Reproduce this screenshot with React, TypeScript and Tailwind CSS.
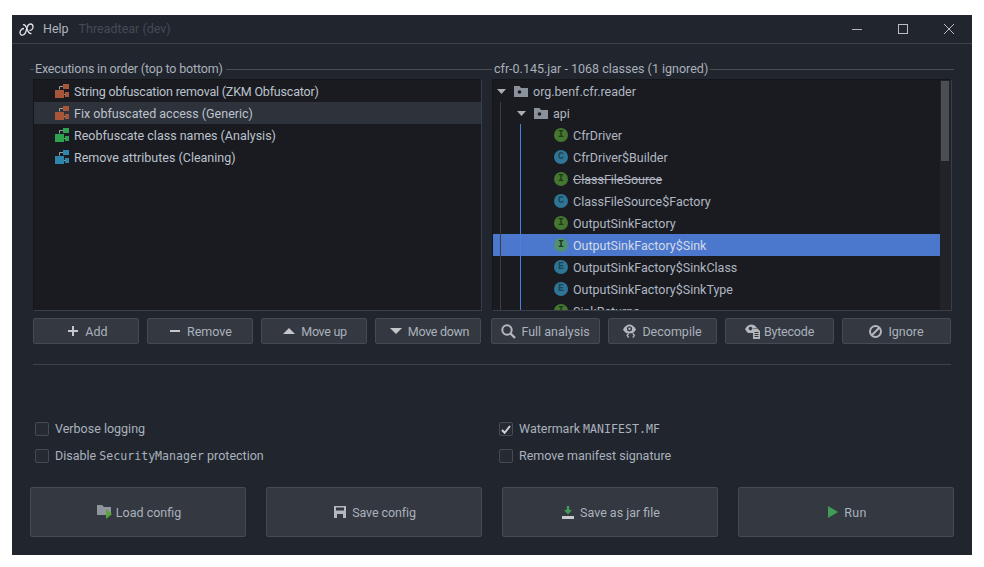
import React from "react";

const font = { fontFamily: '"Roboto", "Liberation Sans", sans-serif' };

function Stack({ color }: { color: string }) {
  return (
    <svg width="14" height="14" viewBox="0 0 14 14" className="shrink-0">
      <path d="M4.5 5.5V2.5H8" stroke="#9aa0a8" strokeWidth="1" fill="none" />
      <rect x="8" y="0" width="6" height="5" fill={color} />
      <rect x="0" y="6" width="9" height="8" fill={color} />
      <rect x="10" y="8" width="4" height="5" fill={color} />
      <path d="M9 10.5h1" stroke="#9aa0a8" />
    </svg>
  );
}

function ExecRow({ color, text, selected, tight }: { color: string; text: string; selected?: boolean; tight?: boolean }) {
  return (
    <div className={`h-[22px] flex items-center pl-[21px] gap-[5px] ${selected ? "bg-[#2e323b]" : ""}`}>
      <Stack color={color} />
      <span className={`pt-[2px] text-[#bcc3cd] whitespace-nowrap ${tight ? "tracking-[-0.19px]" : ""}`}>{text}</span>
    </div>
  );
}

function Folder() {
  return (
    <svg width="14" height="11" viewBox="0 0 14 11" className="shrink-0 block">
      <path d="M0 0H5.5L7 2H14V11H0Z" fill="#8a919b" />
      <circle cx="5.5" cy="6" r="1.8" fill="#1a1b20" />
    </svg>
  );
}

function Caret() {
  return (
    <svg width="9" height="5" viewBox="0 0 9 5" className="shrink-0">
      <path d="M0 0H9L4.5 5Z" fill="#a9adb3" />
    </svg>
  );
}

function Badge({ kind, selected }: { kind: "I" | "C" | "E"; selected?: boolean }) {
  const bg = kind === "I" ? (selected ? "bg-[#4f9171]" : "bg-[#44772f]") : "bg-[#2f7596]";
  const fg = kind === "I" ? "text-[#1f3a17]" : "text-[#1d4558]";
  return (
    <span className={`w-[14px] h-[14px] rounded-full flex items-center justify-center shrink-0 ${bg} ${fg} text-[10px] font-bold leading-none`} style={{ fontFamily: '"Liberation Mono", monospace' }}>
      {kind}
    </span>
  );
}

function ClassRow({ kind, text, strike, selected }: { kind: "I" | "C" | "E"; text: string; strike?: boolean; selected?: boolean }) {
  return (
    <div className={`h-[22px] shrink-0 flex items-center pl-[61px] gap-[5px] ${selected ? "bg-[#4b78cc]" : ""}`}>
      <Badge kind={kind} selected={selected} />
      <span className={`pt-[2px] whitespace-nowrap ${selected ? "text-[#d3daea]" : "text-[#b0b7c2]"} ${strike ? "line-through" : ""}`}>{text}</span>
    </div>
  );
}

function Btn({ icon, text, className = "", textClass = "" }: { icon: React.ReactNode; text: string; className?: string; textClass?: string }) {
  return (
    <div className={`flex items-center justify-center rounded-[2px] border border-[#454a53] bg-[#343840] text-[#aab2bd] ${className}`}>
      {icon}
      <span className={`pt-[2px] whitespace-nowrap ${textClass}`}>{text}</span>
    </div>
  );
}

function Check({ checked, children }: { checked?: boolean; children: React.ReactNode }) {
  return (
    <div className="h-[14px] flex items-center gap-[6px] text-[#aab2bd] whitespace-nowrap">
      <span className="w-[14px] h-[14px] rounded-[2px] border border-[#454a53] bg-[#262a32] flex items-center justify-center shrink-0">
        {checked && (
          <svg width="10" height="9" viewBox="0 0 10 9">
            <path d="M1 5l2.6 2.8L9 1" stroke="#d0d2d6" strokeWidth="2" fill="none" />
          </svg>
        )}
      </span>
      <span className="leading-[14px]">{children}</span>
    </div>
  );
}

const Mono = ({ children }: { children: React.ReactNode }) => (
  <span className="text-[11.6px] leading-none" style={{ fontFamily: '"DejaVu Sans Mono", monospace' }}>{children}</span>
);

const g = "#b4b7bc";

const icons = {
  plus: (
    <svg width="10" height="10" viewBox="0 0 10 10" className="mr-[7px]"><path d="M5 0v10M0 5h10" stroke="#c4c6ca" strokeWidth="2" /></svg>
  ),
  minus: (
    <svg width="10" height="2" viewBox="0 0 10 2" className="mr-[7px]"><path d="M0 1h10" stroke="#c4c6ca" strokeWidth="2" /></svg>
  ),
  up: (
    <svg width="12" height="6" viewBox="0 0 12 6" className="mr-[6px]"><path d="M6 0L12 6H0Z" fill="#c4c6ca" /></svg>
  ),
  down: (
    <svg width="12" height="6" viewBox="0 0 12 6" className="mr-[6px]"><path d="M6 6L12 0H0Z" fill="#c4c6ca" /></svg>
  ),
  search: (
    <svg width="15" height="15" viewBox="0 0 15 15" className="mr-[5px]"><circle cx="6" cy="6" r="4.7" stroke={g} strokeWidth="2" fill="none" /><path d="M9.5 9.5L14 14" stroke={g} strokeWidth="2.4" /></svg>
  ),
  decompile: (
    <svg width="15" height="14" viewBox="0 0 15 14" className="mr-[4px]">
      <path d="M0 5.5C1.8 2 4.5 .5 6.5 .5S11.2 2 13 5.5C12 7.2 10.8 8.4 9.5 9.2H3.5C2.2 8.4 1 7.2 0 5.5Z" fill={g} />
      <circle cx="6.5" cy="4.8" r="2.6" fill="#343840" />
      <circle cx="6.5" cy="4.8" r="1.2" fill={g} />
      <path d="M5.8 9.5L4 11.5l1.8 2M9.7 9.5l1.8 2-1.8 2" stroke={g} strokeWidth="1.2" fill="none" />
    </svg>
  ),
  bytecode: (
    <svg width="15" height="15" viewBox="0 0 15 15" className="mr-[4px]">
      <path d="M0 5C2 1.5 4.5 .5 6.5 .5S10.5 1.5 12 4H8V9H3C1.8 8 .8 6.5 0 5Z" fill={g} />
      <circle cx="5.5" cy="4.6" r="1.8" fill="#343840" />
      <path d="M8 4.5h4.5L15 7v8H8Z" fill={g} />
      <path d="M9.5 8.5h4M9.5 10.5h4M9.5 12.5h4" stroke="#343840" />
    </svg>
  ),
  ban: (
    <svg width="13" height="13" viewBox="0 0 13 13" className="mr-[6px]"><circle cx="6.5" cy="6.5" r="5.5" stroke={g} strokeWidth="2" fill="none" /><path d="M2.8 10.2l7.4-7.4" stroke={g} strokeWidth="2" /></svg>
  ),
  load: (
    <svg width="15" height="14" viewBox="0 0 15 14" className="mr-[4px]">
      <path d="M0 0H5L7 2H14V10H0Z" fill="#8f959d" />
      <path d="M9 4L15 9L9 14Z" fill="#58a53a" />
    </svg>
  ),
  save: (
    <svg width="12" height="12" viewBox="0 0 12 12" className="mr-[6px]">
      <path d="M0 0H12V12H0Z" fill={g} />
      <rect x="2" y="1.5" width="8" height="3" fill="#343840" />
      <rect x="3" y="8" width="6" height="4" fill="#343840" />
    </svg>
  ),
  jar: (
    <svg width="12" height="13" viewBox="0 0 12 13" className="mr-[6px]">
      <path d="M4.8 0h2.4v4H10L6 8.5 2 4h2.8Z" fill="#3f9d55" />
      <rect x="0" y="10" width="12" height="3" fill="#c8c9cc" />
    </svg>
  ),
  run: (
    <svg width="10" height="12" viewBox="0 0 10 12" className="mr-[6px]"><path d="M0 0L10 6L0 12Z" fill="#3f9d55" /></svg>
  ),
};

export default function App() {
  return (
    <div className="w-[984px] h-[567px] bg-white pt-[15px] pl-[12px]">
      <div className="w-[960px] h-[540px] bg-[#21252d] text-[12.5px] leading-none flex flex-col" style={font}>
        <div className="h-[29px] shrink-0 border-b border-[#3e424b] flex items-center">
          <svg width="15" height="13" viewBox="0 0 15 13" className="ml-[7px] mr-[9px]">
            <path d="M5 5.5C3 5.5 1 7.5 1 9.5S2.5 12.5 4 12 7 9 7.5 6.5 9 1 11.5 1 14 2.5 14 4 12.5 7.5 10.5 7.5" stroke="#e2e3e5" strokeWidth="1.3" fill="none" />
            <path d="M4 2C5.5 1 7 3 8 6S10 11 12.5 10.5" stroke="#e2e3e5" strokeWidth="1.3" fill="none" />
          </svg>
          <span className="text-[#aeb5bf]">Help</span>
          <span className="ml-[10px] text-[#454a57]">Threadtear (dev)</span>
          <div className="ml-auto flex items-center">
            <svg width="10" height="1" viewBox="0 0 10 1" className="mr-[36px]"><path d="M0 .5h10" stroke="#b5b5b5" /></svg>
            <svg width="10" height="10" viewBox="0 0 10 10" className="mr-[36px]"><rect x=".5" y=".5" width="9" height="9" stroke="#bdbdbd" fill="none" /></svg>
            <svg width="10" height="10" viewBox="0 0 10 10" className="mr-[18px]"><path d="M0 0l10 10M10 0L0 10" stroke="#bdbdbd" /></svg>
          </div>
        </div>

        <div className="flex-1 px-[18px] pt-[18px] flex flex-col">
          <div className="flex">
            <div className="w-[454px] shrink-0 flex flex-col">
              <div className="h-[14px] flex items-center text-[#a9b0ba]">
                <div className="w-[4px] h-px bg-[#4a4e56] mr-[1px]" />
                <span className="whitespace-nowrap tracking-[-0.17px]">Executions in order (top to bottom)</span>
                <div className="flex-1 h-px bg-[#4a4e56] ml-[3px]" />
              </div>
              <div className="ml-[3px] mr-[2px] mt-[3px] h-[232px] bg-[#1a1b20] border border-[#3a3e47] border-t-[#15161a] border-l-[#15161a]">
                <ExecRow color="#a8563a" text="String obfuscation removal (ZKM Obfuscator)" tight />
                <ExecRow color="#a8563a" text="Fix obfuscated access (Generic)" selected />
                <ExecRow color="#2fa24f" text="Reobfuscate class names (Analysis)" />
                <ExecRow color="#2f86ad" text="Remove attributes (Cleaning)" />
              </div>
              <div className="ml-[3px] mt-[7px] flex gap-[8px]">
                <Btn className="w-[106px] h-[26px] pl-[4px]" icon={icons.plus} text="Add" />
                <Btn className="w-[106px] h-[26px] pl-[2px]" icon={icons.minus} text="Remove" />
                <Btn className="w-[106px] h-[26px] pl-[2px]" icon={icons.up} text="Move up" textClass="tracking-[-0.3px]" />
                <Btn className="w-[106px] h-[26px] pl-[3px]" icon={icons.down} text="Move down" textClass="tracking-[-0.3px]" />
              </div>
            </div>

            <div className="w-[470px] shrink-0 flex flex-col">
              <div className="h-[14px] flex items-center text-[#a9b0ba]">
                <div className="w-[8px] h-px bg-[#4a4e56] mr-[2px]" />
                <span className="whitespace-nowrap">cfr-0.145.jar - 1068 classes (1 ignored)</span>
                <div className="flex-1 h-px bg-[#4a4e56] ml-[2px]" />
              </div>
              <div className="ml-[8px] mr-[2px] mt-[3px] h-[232px] bg-[#1a1b20] border border-[#3a3e47] border-t-[#15161a] border-l-[#15161a] relative flex overflow-hidden">
                <div className="flex-1 flex flex-col min-w-0 overflow-hidden">
                  <div className="h-[22px] shrink-0 flex items-center pl-[4px]">
                    <Caret />
                    <span className="ml-[8px]"><Folder /></span>
                    <span className="pt-[2px] ml-[5px] text-[#b0b7c2]">org.benf.cfr.reader</span>
                  </div>
                  <div className="h-[22px] shrink-0 flex items-center pl-[24px]">
                    <Caret />
                    <span className="ml-[8px]"><Folder /></span>
                    <span className="pt-[2px] ml-[5px] text-[#b0b7c2]">api</span>
                  </div>
                  <ClassRow kind="I" text="CfrDriver" />
                  <ClassRow kind="C" text="CfrDriver$Builder" />
                  <ClassRow kind="I" text="ClassFileSource" strike />
                  <ClassRow kind="C" text="ClassFileSource$Factory" />
                  <ClassRow kind="I" text="OutputSinkFactory" />
                  <ClassRow kind="I" text="OutputSinkFactory$Sink" selected />
                  <ClassRow kind="E" text="OutputSinkFactory$SinkClass" />
                  <ClassRow kind="E" text="OutputSinkFactory$SinkType" />
                  <ClassRow kind="I" text="SinkReturns" />
                </div>
                <div className="w-[11px] shrink-0 bg-[#212329] pt-[1px]">
                  <div className="h-[80px] ml-px mr-[2px] bg-[#4b4e55]" />
                </div>
                <div className="absolute left-[7px] top-[22px] bottom-0 w-px bg-[#3a3d44]" />
                <div className="absolute left-[27px] top-[44px] bottom-0 w-px bg-[#4a7fe0]" />
              </div>
              <div className="ml-[7px] mt-[7px] flex gap-[8px]">
                <Btn className="w-[109px] h-[26px]" icon={icons.search} text="Full analysis" />
                <Btn className="w-[109px] h-[26px]" icon={icons.decompile} text="Decompile" />
                <Btn className="w-[109px] h-[26px]" icon={icons.bytecode} text="Bytecode" textClass="tracking-[-0.2px]" />
                <Btn className="w-[109px] h-[26px]" icon={icons.ban} text="Ignore" />
              </div>
            </div>
          </div>

          <div className="ml-[3px] mr-[3px] mt-[20px] h-px bg-[#3e424b]" />

          <div className="mt-[57px] flex">
            <div className="w-[464px] pl-[5px] flex flex-col gap-[13px]">
              <Check>Verbose logging</Check>
              <Check>Disable <Mono>SecurityManager</Mono> protection</Check>
            </div>
            <div className="flex flex-col gap-[13px] pl-[5px]">
              <Check checked>Watermark <Mono>MANIFEST.MF</Mono></Check>
              <Check>Remove manifest signature</Check>
            </div>
          </div>

          <div className="mt-[24px] flex gap-[20px]">
            <Btn className="w-[216px] h-[50px] pl-[2px]" icon={icons.load} text="Load config" />
            <Btn className="w-[216px] h-[50px] pl-[2px]" icon={icons.save} text="Save config" textClass="tracking-[-0.1px]" />
            <Btn className="w-[216px] h-[50px] pl-[2px]" icon={icons.jar} text="Save as jar file" />
            <Btn className="w-[216px] h-[50px] pl-[3px]" icon={icons.run} text="Run" textClass="tracking-[0.4px]" />
          </div>
        </div>
      </div>
    </div>
  );
}
